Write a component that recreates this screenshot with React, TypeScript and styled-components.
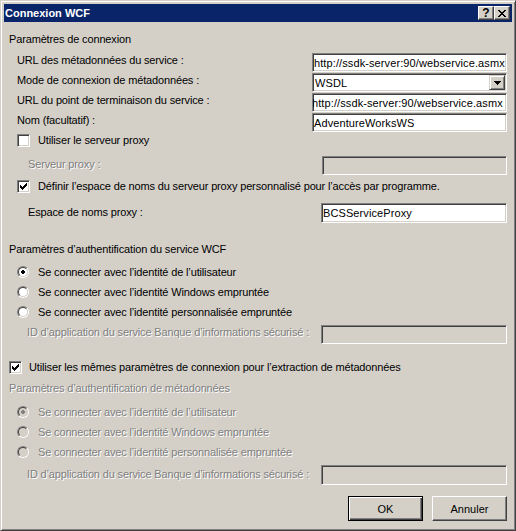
import React from 'react';
import styled, { createGlobalStyle, css } from 'styled-components';

const Global = createGlobalStyle`
  html, body { margin: 0; padding: 0; background: #D4D0C8; }
  body { font-family: "Liberation Sans", Arial, sans-serif; font-size: 11px; color: #000; letter-spacing: -0.15px; }
  * { box-sizing: border-box; }
`;

const disabledText = css`
  color: #808080;
  text-shadow: 1px 1px 0 #fff;
`;

const Window = styled.div`
  width: 516px;
  height: 531px;
  background: #D4D0C8;
  border: 1px solid;
  border-color: #D4D0C8 #404040 #404040 #D4D0C8;
  box-shadow: inset 1px 1px #fff, inset -1px -1px #808080;
  padding: 3px;
  display: flex;
  flex-direction: column;
`;

const TitleBar = styled.div`
  height: 18px;
  flex: none;
  background: #0A246A;
  color: #fff;
  display: flex;
  align-items: center;
  padding: 0 2px 0 1px;
  font-weight: bold;
  line-height: 18px;
  letter-spacing: 0;
`;

const Title = styled.span`
  flex: 1;
  white-space: nowrap;
`;

const CaptionButtons = styled.div`
  display: flex;
`;

const CaptionButton = styled.div`
  width: 16px;
  height: 14px;
  background: #D4D0C8;
  border: 1px solid;
  border-color: #fff #404040 #404040 #fff;
  box-shadow: inset -1px -1px #808080;
  display: flex;
  align-items: center;
  justify-content: center;
  color: #000;
  font-weight: bold;
  font-size: 12px;
  line-height: 12px;
`;

const Body = styled.div`
  flex: 1;
  display: flex;
  flex-direction: column;
  padding: 11px 5px 0 5px;
`;

const SectionTitle = styled.div<{ $mt?: number; $h: number; $disabled?: boolean }>`
  margin-top: ${(p) => p.$mt ?? 0}px;
  height: ${(p) => p.$h}px;
  line-height: 13px;
  white-space: nowrap;
  ${(p) => p.$disabled && disabledText}
`;

const FieldRow = styled.div<{ $mt?: number; $h: number; $indent: number }>`
  display: flex;
  justify-content: space-between;
  align-items: flex-start;
  margin-top: ${(p) => p.$mt ?? 0}px;
  height: ${(p) => p.$h}px;
  padding-left: ${(p) => p.$indent}px;
`;

const FieldLabel = styled.span<{ $pt: number; $disabled?: boolean }>`
  padding-top: ${(p) => p.$pt}px;
  line-height: 13px;
  white-space: nowrap;
  ${(p) => p.$disabled && disabledText}
`;

const sunken = css`
  border: 1px solid;
  border-color: #808080 #fff #fff #808080;
  box-shadow: inset 1px 1px #404040, inset -1px -1px #D4D0C8;
`;

const TextBox = styled.div<{ $w: number; $h: number; $disabled?: boolean }>`
  ${sunken};
  width: ${(p) => p.$w}px;
  height: ${(p) => p.$h}px;
  flex: none;
  background: ${(p) => (p.$disabled ? '#D4D0C8' : '#fff')};
  padding: 3px 1px 0 1px;
  line-height: 13px;
  letter-spacing: 0.1px;
  white-space: nowrap;
  overflow: hidden;
  display: flex;
`;

const BoxText = styled.span<{ $scroll?: number }>`
  flex: none;
  margin-left: ${(p) => -(p.$scroll ?? 0)}px;
`;

const ComboBox = styled.div<{ $w: number; $h: number }>`
  ${sunken};
  width: ${(p) => p.$w}px;
  height: ${(p) => p.$h}px;
  flex: none;
  background: #fff;
  padding: 1px;
  display: flex;
  align-items: stretch;
`;

const ComboText = styled.span`
  flex: 1;
  padding: 2px 0 0 1px;
  line-height: 13px;
  letter-spacing: 0.1px;
  white-space: nowrap;
`;

const DropButton = styled.span`
  width: 16px;
  flex: none;
  background: #D4D0C8;
  border: 1px solid;
  border-color: #D4D0C8 #404040 #404040 #D4D0C8;
  box-shadow: inset 1px 1px #fff, inset -1px -1px #808080;
  display: flex;
  align-items: center;
  justify-content: center;
`;

const ChoiceRow = styled.div<{ $mt?: number; $h: number; $indent: number; $gap: number; $disabled?: boolean }>`
  display: flex;
  align-items: center;
  margin-top: ${(p) => p.$mt ?? 0}px;
  height: ${(p) => p.$h}px;
  padding-left: ${(p) => p.$indent}px;
  gap: ${(p) => p.$gap}px;
  line-height: 13px;
  white-space: nowrap;
  ${(p) => p.$disabled && disabledText}
`;

const CheckBoxBox = styled.span`
  ${sunken};
  width: 13px;
  height: 13px;
  flex: none;
  background: #fff;
  padding: 2px;
  display: flex;
  text-shadow: none;
`;

const RadioGroup = styled.div<{ $mt: number }>`
  display: flex;
  flex-direction: column;
  gap: 6px;
  margin-top: ${(p) => p.$mt}px;
`;

const RadioOuter = styled.span`
  width: 12px;
  height: 12px;
  flex: none;
  border-radius: 50%;
  border: 1px solid;
  border-color: #808080 #fff #fff #808080;
  display: flex;
`;

const RadioInner = styled.span<{ $disabled?: boolean }>`
  flex: 1;
  border-radius: 50%;
  border: 1px solid;
  border-color: #404040 #D4D0C8 #D4D0C8 #404040;
  background: ${(p) => (p.$disabled ? '#D4D0C8' : '#fff')};
  display: flex;
  align-items: center;
  justify-content: center;
`;

const ButtonRow = styled.div`
  display: flex;
  justify-content: flex-end;
  gap: 9px;
  margin-top: 11px;
`;

const PushButton = styled.button<{ $default?: boolean }>`
  width: 75px;
  height: 25px;
  padding: 0;
  font: 11px "Liberation Sans", Arial, sans-serif;
  color: #000;
  background: #D4D0C8;
  ${(p) =>
    p.$default
      ? css`
          border: 1px solid #000;
          box-shadow: inset 1px 1px #fff, inset -1px -1px #404040, inset -2px -2px #808080;
        `
      : css`
          border: 1px solid;
          border-color: #fff #404040 #404040 #fff;
          box-shadow: inset -1px -1px #808080;
        `}
`;

const CloseGlyph = () => (
  <svg width="8" height="7" viewBox="0 0 8 7" shapeRendering="crispEdges">
    <g fill="#000">
      <rect x="0" y="0" width="2" height="1" />
      <rect x="6" y="0" width="2" height="1" />
      <rect x="1" y="1" width="2" height="1" />
      <rect x="5" y="1" width="2" height="1" />
      <rect x="2" y="2" width="4" height="1" />
      <rect x="3" y="3" width="2" height="1" />
      <rect x="2" y="4" width="4" height="1" />
      <rect x="1" y="5" width="2" height="1" />
      <rect x="5" y="5" width="2" height="1" />
      <rect x="0" y="6" width="2" height="1" />
      <rect x="6" y="6" width="2" height="1" />
    </g>
  </svg>
);

const CheckMark = () => (
  <svg width="7" height="7" viewBox="0 0 7 7" shapeRendering="crispEdges">
    <g fill="#000">
      <rect x="6" y="0" width="1" height="1" />
      <rect x="5" y="1" width="2" height="1" />
      <rect x="0" y="2" width="1" height="1" />
      <rect x="4" y="2" width="3" height="1" />
      <rect x="0" y="3" width="2" height="1" />
      <rect x="3" y="3" width="3" height="1" />
      <rect x="0" y="4" width="5" height="1" />
      <rect x="1" y="5" width="3" height="1" />
      <rect x="2" y="6" width="1" height="1" />
    </g>
  </svg>
);

const DownArrow = () => (
  <svg width="7" height="4" viewBox="0 0 7 4" shapeRendering="crispEdges">
    <g fill="#000">
      <rect x="0" y="0" width="7" height="1" />
      <rect x="1" y="1" width="5" height="1" />
      <rect x="2" y="2" width="3" height="1" />
      <rect x="3" y="3" width="1" height="1" />
    </g>
  </svg>
);

const RadioDot = ({ color }: { color: string }) => (
  <svg width="4" height="4" viewBox="0 0 4 4" shapeRendering="crispEdges">
    <g fill={color}>
      <rect x="1" y="0" width="2" height="1" />
      <rect x="0" y="1" width="4" height="2" />
      <rect x="1" y="3" width="2" height="1" />
    </g>
  </svg>
);

const CheckBox = ({ checked }: { checked?: boolean }) => (
  <CheckBoxBox>{checked && <CheckMark />}</CheckBoxBox>
);

const Radio = ({ checked, disabled }: { checked?: boolean; disabled?: boolean }) => (
  <RadioOuter>
    <RadioInner $disabled={disabled}>{checked && <RadioDot color={disabled ? '#808080' : '#000'} />}</RadioInner>
  </RadioOuter>
);

const radioLabels = [
  'Se connecter avec l’identité de l’utilisateur',
  'Se connecter avec l’identité Windows empruntée',
  'Se connecter avec l’identité personnalisée empruntée',
];

const URL = 'http://ssdk-server:90/webservice.asmx';
const SECURE_ID = 'ID d’application du service Banque d’informations sécurisé :';

const RadioList = ({ mt, disabled }: { mt: number; disabled?: boolean }) => (
  <RadioGroup $mt={mt}>
    {radioLabels.map((label, i) => (
      <ChoiceRow key={label} $h={14} $indent={8} $gap={9} $disabled={disabled}>
        <Radio checked={i === 0} disabled={disabled} />
        <span>{label}</span>
      </ChoiceRow>
    ))}
  </RadioGroup>
);

export default function App() {
  return (
    <>
      <Global />
      <Window>
        <TitleBar>
          <Title>Connexion WCF</Title>
          <CaptionButtons>
            <CaptionButton>?</CaptionButton>
            <CaptionButton>
              <CloseGlyph />
            </CaptionButton>
          </CaptionButtons>
        </TitleBar>
        <Body>
          <SectionTitle $h={20}>Paramètres de connexion</SectionTitle>

          <FieldRow $h={20} $indent={8}>
            <FieldLabel $pt={1}>URL des métadonnées du service :</FieldLabel>
            <TextBox $w={195} $h={19}>
              <BoxText>{URL}</BoxText>
            </TextBox>
          </FieldRow>
          <FieldRow $h={20} $indent={8}>
            <FieldLabel $pt={1}>Mode de connexion de métadonnées :</FieldLabel>
            <ComboBox $w={195} $h={19}>
              <ComboText>WSDL</ComboText>
              <DropButton>
                <DownArrow />
              </DropButton>
            </ComboBox>
          </FieldRow>
          <FieldRow $h={20} $indent={8}>
            <FieldLabel $pt={1}>URL du point de terminaison du service :</FieldLabel>
            <TextBox $w={195} $h={19}>
              <BoxText $scroll={2}>{URL}</BoxText>
            </TextBox>
          </FieldRow>
          <FieldRow $h={20} $indent={8}>
            <FieldLabel $pt={1}>Nom (facultatif) :</FieldLabel>
            <TextBox $w={195} $h={19}>
              <BoxText>AdventureWorksWS</BoxText>
            </TextBox>
          </FieldRow>

          <ChoiceRow $h={15} $indent={8} $gap={8}>
            <CheckBox />
            <span>Utiliser le serveur proxy</span>
          </ChoiceRow>

          <FieldRow $mt={8} $h={19} $indent={19}>
            <FieldLabel $pt={2} $disabled>
              Serveur proxy :
            </FieldLabel>
            <TextBox $w={185} $h={19} $disabled />
          </FieldRow>

          <ChoiceRow $mt={4} $h={15} $indent={8} $gap={8}>
            <CheckBox checked />
            <span>Définir l’espace de noms du serveur proxy personnalisé pour l’accès par programme.</span>
          </ChoiceRow>

          <FieldRow $mt={9} $h={20} $indent={19}>
            <FieldLabel $pt={3}>Espace de noms proxy :</FieldLabel>
            <TextBox $w={186} $h={20}>
              <BoxText>BCSServiceProxy</BoxText>
            </TextBox>
          </FieldRow>

          <SectionTitle $mt={20} $h={13}>
            Paramètres d’authentification du service WCF
          </SectionTitle>

          <RadioList mt={9} />

          <FieldRow $mt={6} $h={19} $indent={18}>
            <FieldLabel $pt={1} $disabled>
              {SECURE_ID}
            </FieldLabel>
            <TextBox $w={186} $h={19} $disabled />
          </FieldRow>

          <ChoiceRow $mt={16} $h={15} $indent={0} $gap={7}>
            <CheckBox checked />
            <span>Utiliser les mêmes paramètres de connexion pour l’extraction de métadonnées</span>
          </ChoiceRow>

          <SectionTitle $mt={7} $h={13} $disabled>
            Paramètres d’authentification de métadonnées
          </SectionTitle>

          <RadioList mt={10} disabled />

          <FieldRow $mt={6} $h={20} $indent={18}>
            <FieldLabel $pt={3} $disabled>
              {SECURE_ID}
            </FieldLabel>
            <TextBox $w={186} $h={20} $disabled />
          </FieldRow>

          <ButtonRow>
            <PushButton $default>OK</PushButton>
            <PushButton>Annuler</PushButton>
          </ButtonRow>
        </Body>
      </Window>
    </>
  );
}
